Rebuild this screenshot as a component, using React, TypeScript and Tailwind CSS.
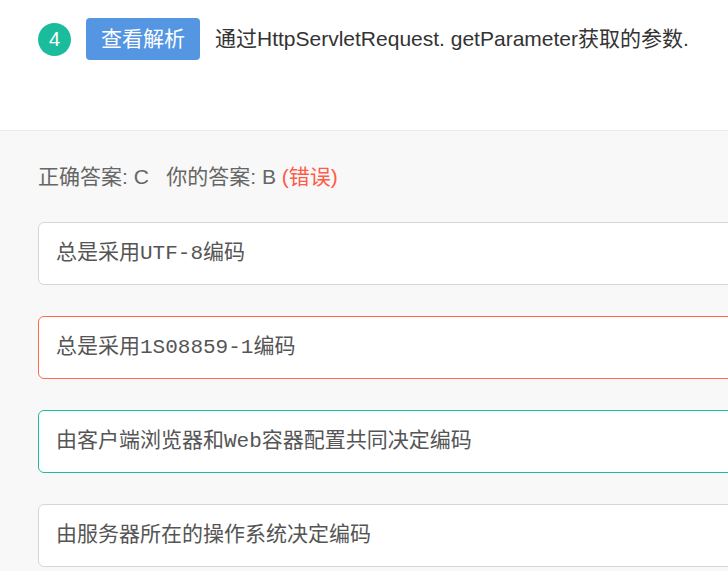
export default function App() {
  const options = [
    { text: "总是采用UTF-8编码", border: "border-[#d6d6d6]" },
    { text: "总是采用1S08859-1编码", border: "border-[#ff6a4f]" },
    { text: "由客户端浏览器和Web容器配置共同决定编码", border: "border-[#1bbc9b]" },
    { text: "由服务器所在的操作系统决定编码", border: "border-[#d6d6d6]" },
  ];

  return (
    <div className="h-[571px] w-[728px] overflow-hidden bg-[#f8f8f8] font-['Liberation_Sans','Noto_Sans_CJK_SC',sans-serif]">
      <div className="flex h-[131px] items-start border-b border-[#ececec] bg-white pl-[38px] pt-[18px]">
        <div className="flex h-[42px] items-center">
          <div className="flex h-[33px] w-[33px] items-center justify-center rounded-full bg-[#1bbc9b] text-[20px] text-white">
            4
          </div>
          <button className="ml-[15px] h-[42px] w-[114px] rounded-[4px] bg-[#5596e3] text-[21px] text-white">
            查看解析
          </button>
          <span className="ml-[15px] whitespace-nowrap text-[21px] text-[#333]">
            通过HttpServletRequest. getParameter获取的参数.
          </span>
        </div>
      </div>

      <div className="pl-[38px] pt-[32px]">
        <p className="h-[28px] whitespace-nowrap text-[21px] leading-[28px] text-[#666]">
          正确答案: C&nbsp;&nbsp;&nbsp;你的答案: B <span className="text-[#ff5a48]">(错误)</span>
        </p>
        <div className="mt-[31px] flex flex-col gap-[31px]">
          {options.map((o) => (
            <div
              key={o.text}
              className={`flex h-[63px] w-[760px] items-center rounded-[6px] border bg-white px-[17px] font-['Liberation_Mono','Noto_Sans_CJK_SC',monospace] text-[21px] text-[#555] ${o.border}`}
            >
              {o.text}
            </div>
          ))}
        </div>
      </div>
    </div>
  );
}
